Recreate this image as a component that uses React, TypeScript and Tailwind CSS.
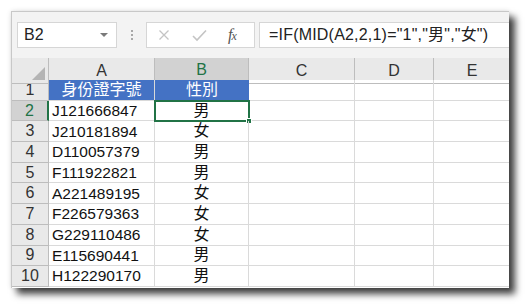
import React from "react";

const rows: [string, string][] = [
  ["J121666847", "男"],
  ["J210181894", "女"],
  ["D110057379", "男"],
  ["F111922821", "男"],
  ["A221489195", "女"],
  ["F226579363", "女"],
  ["G229110486", "女"],
  ["E115690441", "男"],
  ["H122290170", "男"],
];

const font = { fontFamily: '"Liberation Sans", "Noto Sans CJK TC", sans-serif' };
const cols = "grid grid-cols-[37px_106px_94px_106px_79px_76px]";
const cell = "border-r border-b border-[#dadada] h-[20.7px]";

export default function App() {
  return (
    <div className="w-[529px] h-[308px] bg-white pl-[11px] pt-[11px]" style={font}>
      <div className="w-[498px] h-[277px] overflow-hidden border-l border-t border-[#c8c8c8] bg-white shadow-[0_0_5px_rgba(0,0,0,0.12),6px_6px_7px_rgba(0,0,0,0.75)]">
        {/* formula bar */}
        <div className="h-[46px] bg-[#f3f3f3] flex items-start pt-[10px] pl-[5px]">
          <div className="w-[100px] h-[26px] bg-white border border-[#d6d6d6] flex items-center pl-[6px] pr-[8px] text-[16px] text-[#222]">
            <span className="flex-1">B2</span>
            <span className="w-0 h-0 border-l-[4px] border-r-[4px] border-t-[4px] border-l-transparent border-r-transparent border-t-[#7a7a7a]" />
          </div>
          <div className="w-[29px] h-[26px] flex flex-col items-center justify-center gap-[2px]">
            <span className="w-[2px] h-[2px] bg-[#a8a8a8]" />
            <span className="w-[2px] h-[2px] bg-[#a8a8a8]" />
            <span className="w-[2px] h-[2px] bg-[#a8a8a8]" />
          </div>
          <div className="w-[109px] h-[26px] bg-white border border-[#d6d6d6] flex items-center pl-[11px]">
            <svg width="12" height="12" viewBox="0 0 12 12" className="mr-[22px]">
              <path d="M1.5 1.5L10.5 10.5M10.5 1.5L1.5 10.5" stroke="#c4c4c4" strokeWidth="1.3" />
            </svg>
            <svg width="15" height="13" viewBox="0 0 15 13" className="mr-[21px]">
              <path d="M1 7L5 11L14 1.5" stroke="#c4c4c4" strokeWidth="1.6" fill="none" />
            </svg>
            <span className="text-[16px] italic text-[#555] tracking-[-1px] leading-none" style={{ fontFamily: '"Liberation Serif", serif' }}>
              f<span className="text-[12px]">x</span>
            </span>
          </div>
          <div className="ml-[4px] flex-1 h-[26px] bg-white border-l border-t border-b border-[#d6d6d6] flex items-center pl-[9px] text-[16px] tracking-[0.2px] text-[#222] whitespace-nowrap">
            =IF(MID(A2,2,1)="1","男","女")
          </div>
        </div>

        {/* column headers */}
        <div className={`${cols} h-[22px] bg-[#e9e9e9] text-[16px] text-[#333]`}>
          <div className="relative border-r border-b border-[#bdbdbd]">
            <span className="absolute right-[3px] bottom-[3px] w-0 h-0" style={{ borderBottom: "13px solid #b4b4b4", borderLeft: "13px solid transparent" }} />
          </div>
          <div className="border-r border-b border-[#bdbdbd] flex items-center justify-center">A</div>
          <div className="bg-[#d2d2d2] border-r border-[#bdbdbd] border-b-2 border-b-[#217346] flex items-center justify-center text-[#217346]">B</div>
          <div className="border-r border-b border-[#bdbdbd] flex items-center justify-center">C</div>
          <div className="border-r border-b border-[#bdbdbd] flex items-center justify-center">D</div>
          <div className="border-b border-[#bdbdbd] flex items-center justify-center">E</div>
        </div>

        {/* row 1 */}
        <div className={`${cols} text-[16px]`}>
          <div className="h-[20.7px] bg-[#e9e9e9] border-r border-b border-[#bdbdbd] flex items-center justify-center text-[#333]">1</div>
          <div className="h-[20.7px] bg-[#4472c4] border-r border-b border-[#d9d9d9] flex items-center justify-center text-white">身份證字號</div>
          <div className="h-[20.7px] bg-[#4472c4] border-b border-[#d9d9d9] flex items-center justify-center text-white">性別</div>
          <div className={cell} />
          <div className={cell} />
          <div className={cell} />
        </div>

        {rows.map(([id, sex], i) => {
          const active = i === 0;
          return (
            <div key={id} className={`${cols} text-[16px] text-[#111]`}>
              <div
                className={`h-[20.7px] border-b border-[#bdbdbd] flex items-center justify-center ${
                  active ? "bg-[#d2d2d2] border-r-2 border-r-[#217346] text-[#217346]" : "bg-[#e9e9e9] border-r text-[#333]"
                }`}
              >
                {i + 2}
              </div>
              <div className={`${cell} flex items-center pl-[3px] text-[15.5px]`}>{id}</div>
              <div className={`${cell} relative flex items-center justify-center`}>
                {sex}
                {active && (
                  <>
                    <span className="absolute -left-px -top-px right-[-2px] bottom-[-2px] border-2 border-[#217346]" />
                    <span className="absolute right-[-4px] bottom-[-4px] w-[6px] h-[6px] bg-[#217346] border border-white" />
                  </>
                )}
              </div>
              <div className={cell} />
              <div className={cell} />
              <div className={cell} />
            </div>
          );
        })}
      </div>
    </div>
  );
}
